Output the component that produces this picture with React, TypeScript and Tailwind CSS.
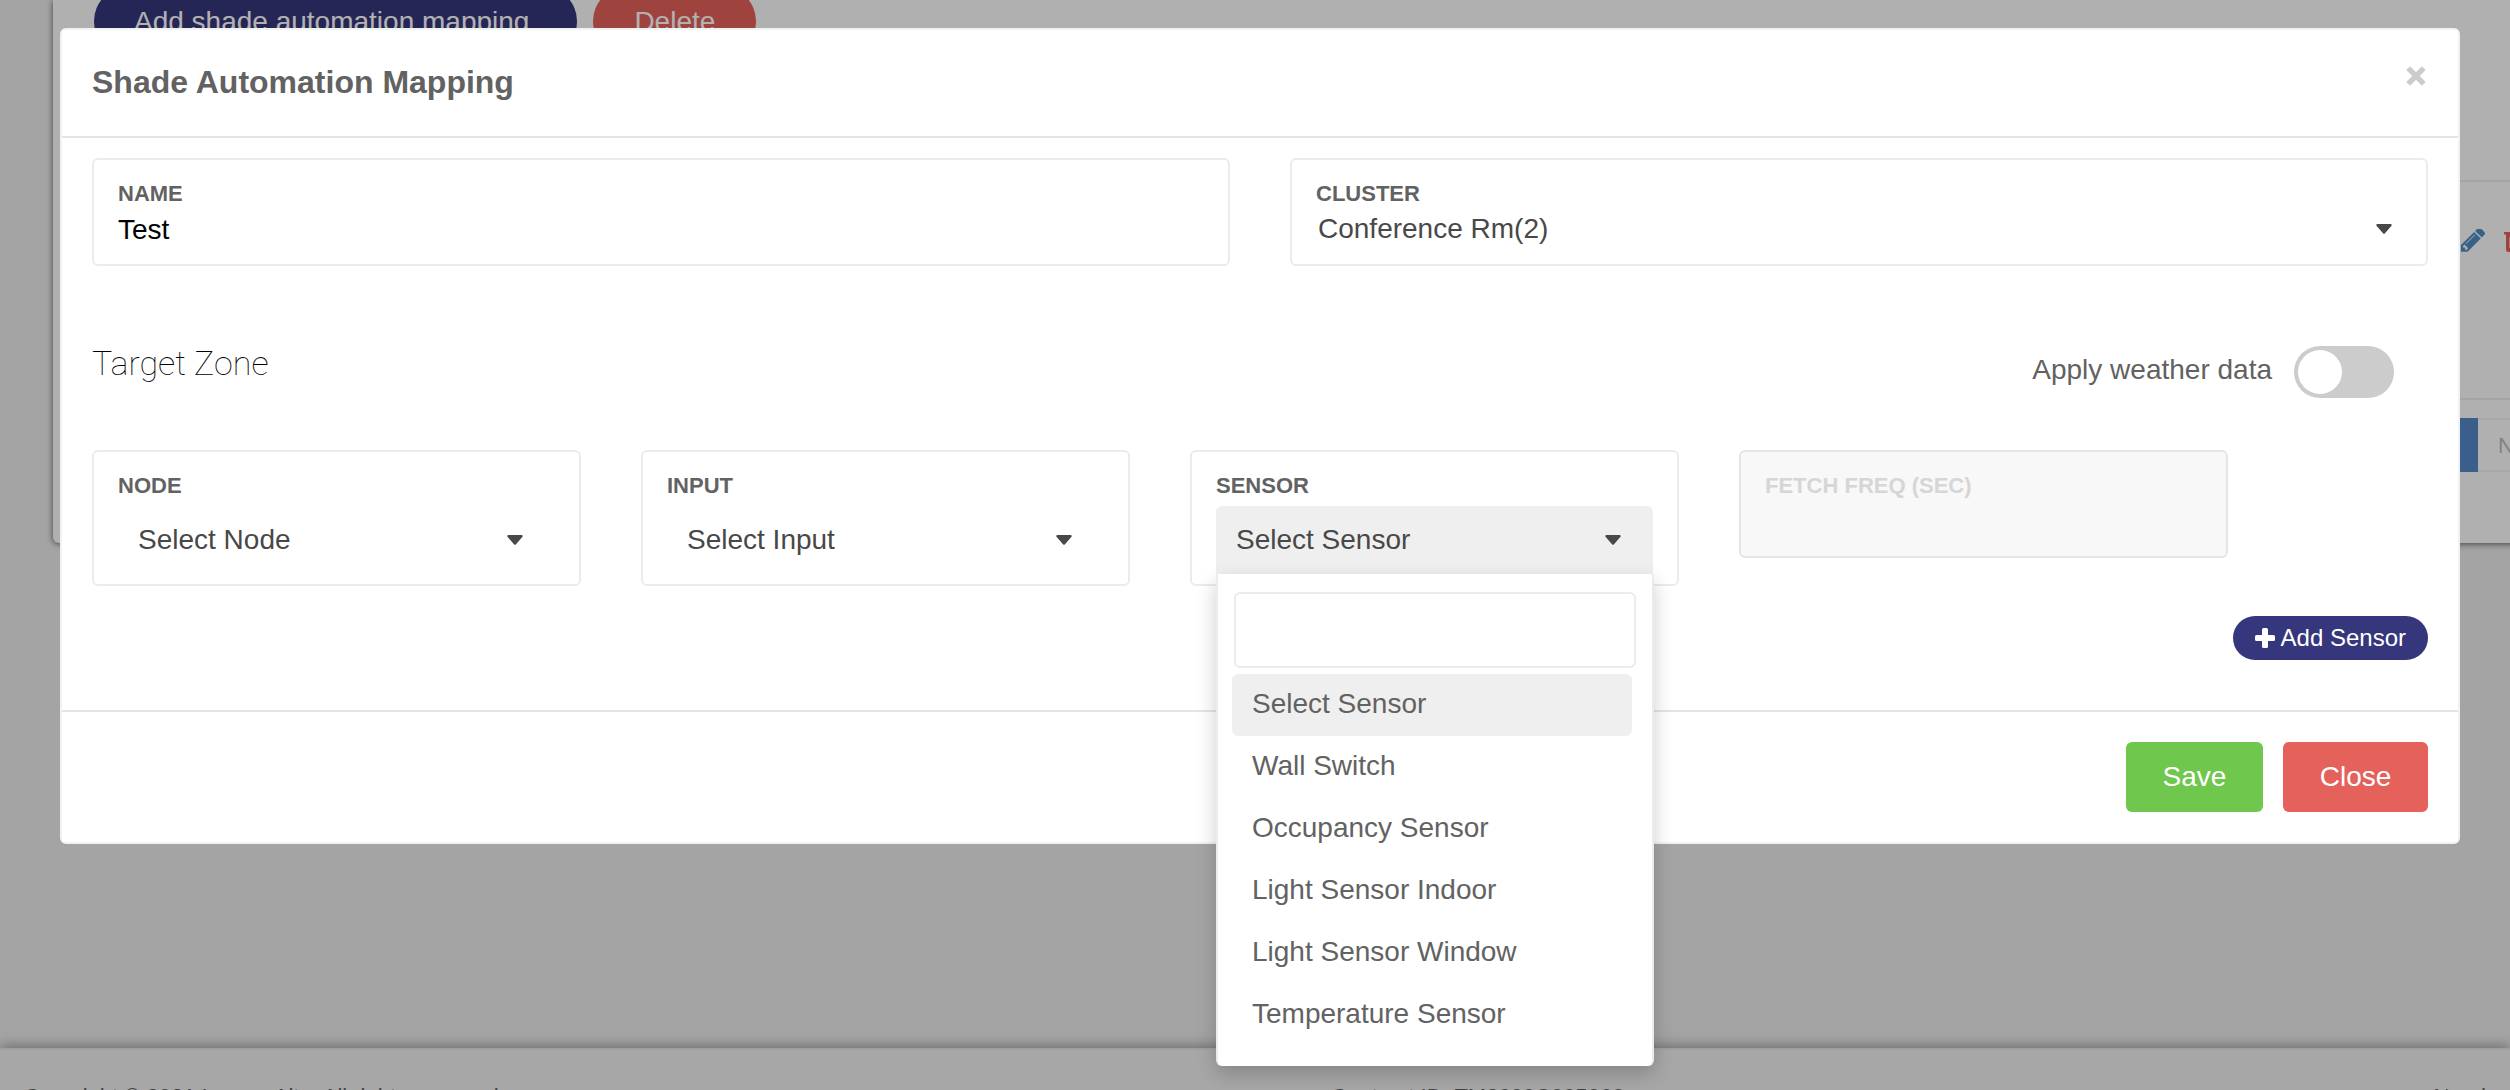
import React, { useState } from "react";

const label = "block text-[22px] leading-7 font-bold uppercase text-[#626262]";
const field = "rounded-md border-2 border-[#ebebeb] bg-white px-6 pt-5";
const options = [
  "Select Sensor",
  "Wall Switch",
  "Occupancy Sensor",
  "Light Sensor Indoor",
  "Light Sensor Window",
  "Temperature Sensor",
];

function Caret() {
  return (
    <svg viewBox="0 0 16 10" className="h-[10px] w-4 shrink-0" aria-hidden="true">
      <path d="M1.6 0h12.8c1.2 0 1.7 1.3.9 2.1L9 9.3a1.4 1.4 0 0 1-2 0L.7 2.1C-.1 1.3.4 0 1.6 0z" fill="#484848" />
    </svg>
  );
}

function CloseIcon() {
  return (
    <svg viewBox="0 0 20 20" className="size-5" aria-hidden="true">
      <path d="M2.2 2.2l15.600 15.600M17.800 2.200L2.200 17.800" stroke="#cccccc" strokeWidth="5.400" />
    </svg>
  );
}

function PlusIcon() {
  return (
    <svg viewBox="0 0 20 20" className="size-5" aria-hidden="true">
      <rect x="0" y="7" width="20" height="6" rx="1.500" fill="white" />
      <rect x="7" y="0" width="6" height="20" rx="1.500" fill="white" />
    </svg>
  );
}

function PencilIcon() {
  return (
    <svg viewBox="128 253 1515 1411" className="h-[23px] w-6" aria-hidden="true">
      <path
        fill="#508dc3"
        d="M491 1536l91-91-235-235-91 91v107h128v128h107zm523-928q0-22-22-22-10 0-17 7l-542 542q-7 7-7 17 0 22 22 22 10 0 17-7l542-542q7-7 7-17zm-54-192l416 416-832 832h-416v-416zm683 96q0 53-37 90l-166 166-416-416 166-165q36-38 90-38 53 0 91 38l235 234q37 39 37 91z"
      />
    </svg>
  );
}

function TrashIcon() {
  return (
    <svg viewBox="0 0 20 23" className="h-[23px] w-5" aria-hidden="true">
      <path
        fill="#e46059"
        fillRule="evenodd"
        d="M.5 3H6l1-2.200Q7.300 0 8.200 0h3.600q.9 0 1.200.8L14 3h5.500q.5 0 .5.500V5q0 .5-.5.500H18V20q0 3-2.500 3h-11Q2 23 2 20V5.500H.5Q0 5.500 0 5V3.500Q0 3 .5 3zM8 3h4l-.6-1.300H8.600zM5.500 8v11H7V8zm3.800 0v11h1.400V8zM13 8v11h1.500V8z"
      />
    </svg>
  );
}

function ZoneSelect({ id, title, value }: { id: string; title: string; value: string }) {
  return (
    <div className={`${field} h-[136px] pb-2`}>
      <label htmlFor={id} className={label}>{title}</label>
      <div className="mt-1.5 flex h-[68px] items-center pr-8 pl-5">
        <select id={id} className="min-w-0 flex-1 appearance-none bg-transparent text-[28px] leading-9 text-[#484848]">
          <option>{value}</option>
        </select>
        <Caret />
      </div>
    </div>
  );
}

function Backdrop() {
  return (
    <div className="flex h-screen flex-col bg-[#ebebeb]">
      <main className="-mr-6 ml-[53px] h-[543px] rounded-b-md bg-[#fcfcfc] pl-[41px] shadow-[0_1px_6px_rgba(0,0,0,0.6)]">
        <div className="flex gap-4">
          <button className="-mt-[13px] h-[69px] rounded-[34px] bg-[#36367c] pr-12 pl-10 text-[28px] whitespace-nowrap text-white">
            Add shade automation mapping
          </button>
          <button className="-mt-[13px] h-[69px] rounded-[34px] bg-[#e46059] px-[41px] text-[28px] text-white">Delete</button>
        </div>
        <div className="mt-[124px] flex h-[220px] items-start justify-end border-y-2 border-[#ebebeb] pt-[47px] pr-6">
          <button aria-label="Edit" className="w-[43px]"><PencilIcon /></button>
          <button aria-label="Remove" className="w-[6px]"><TrashIcon /></button>
        </div>
        <div className="mt-[18px] flex justify-end pr-6">
          <button className="h-[54px] w-12 bg-[#5589c7] text-2xl text-white">1</button>
          <button className="h-[54px] w-8 overflow-hidden border-y-2 border-[#f2f2f2] pl-5 text-left text-[22px] text-[#bbbbbb]">Next</button>
        </div>
      </main>
      <div className="flex-1" />
      <footer className="grid h-[42px] grid-cols-[531fr_400fr_69fr] overflow-hidden border-t-2 border-[#e5e5e5] bg-[#efefef] px-6 pt-[33px] text-[22px] leading-7 whitespace-nowrap text-[#626262] shadow-[0_-2px_12px_rgba(0,0,0,0.35)]">
        <span>Copyright © 2021 Lumen Alto. All rights reserved</span>
        <span>Contract ID: TM2000C005060</span>
        <span className="text-right">Need</span>
      </footer>
    </div>
  );
}

export default function App() {
  const [selected, setSelected] = useState("Select Sensor");
  return (
    <div className="relative h-screen overflow-hidden font-['Liberation_Sans',Arial,sans-serif]">
      <Backdrop />
      <div className="absolute inset-0 bg-black/30 pt-7 pr-[50px] pl-[60px]">
        <div role="dialog" aria-labelledby="dialog-title" className="rounded-md border-2 border-[#f0f3f2] bg-white">
          <header className="flex h-[108px] items-start justify-between border-b-2 border-[#e5e5e5] px-[30px] pt-8">
            <h1 id="dialog-title" className="text-[32px] leading-10 font-bold text-[#626262]">Shade Automation Mapping</h1>
            <button aria-label="Close dialog" className="flex h-7 items-center pr-0.5"><CloseIcon /></button>
          </header>

          <section className="px-[30px] pt-5">
            <div className="grid grid-cols-2 gap-[60px]">
              <div className={`${field} h-[108px]`}>
                <label htmlFor="name" className={label}>Name</label>
                <input id="name" defaultValue="Test" className="block h-11 w-full bg-transparent text-[28px] text-black outline-none" />
              </div>
              <div className={`${field} h-[108px]`}>
                <label htmlFor="cluster" className={label}>Cluster</label>
                <div className="flex h-[42px] items-center pr-[10px] pl-0.5">
                  <select id="cluster" className="min-w-0 flex-1 appearance-none bg-transparent text-[28px] leading-9 text-[#484848]">
                    <option>Conference Rm(2)</option>
                  </select>
                  <Caret />
                </div>
              </div>
            </div>

            <div className="mt-[70px] flex h-[72px] items-start justify-between pr-[34px]">
              <h2 className="font-[Roboto] text-[34px] leading-[54px] font-thin text-black">Target Zone</h2>
              <label className="mt-2.5 flex items-center gap-[22px] text-[28px] text-[#626262]">
                <span className="pb-1">Apply weather data</span>
                <span className="flex h-[52px] w-[100px] items-center rounded-full bg-[#cccccc] px-1 has-checked:justify-end has-checked:bg-[#6fc74d]">
                  <input type="checkbox" role="switch" className="size-11 appearance-none rounded-full bg-white" />
                </span>
              </label>
            </div>

            <div className="mt-[42px] grid grid-cols-[repeat(4,minmax(0,489fr))_140fr] gap-x-[60px]">
              <ZoneSelect id="node" title="Node" value="Select Node" />
              <ZoneSelect id="input" title="Input" value="Select Input" />
              <div className={`${field} relative h-[136px]`}>
                <span id="sensor-label" className={label}>Sensor</span>
                <button aria-labelledby="sensor-label" aria-expanded="true" className="mt-1.5 flex h-[68px] w-full items-center justify-between rounded-t-md bg-[#efefef] pr-8 pl-5 text-[28px] text-[#484848]">
                  {selected}
                  <Caret />
                </button>
                <div className="absolute top-[122px] right-[23px] left-6 z-10 rounded-b-md border-x-2 border-[#ebebeb] bg-white px-4 pt-[18px] pb-5 shadow-[0_8px_20px_rgba(0,0,0,0.2)]">
                  <input aria-label="Search sensors" className="mb-1.5 block h-[76px] w-full rounded-md border-2 border-[#ebebeb] px-4 text-[28px]" />
                  <ul role="listbox" aria-labelledby="sensor-label" className="mr-1 -ml-0.5">
                    {options.map((option) => (
                      <li
                        key={option}
                        role="option"
                        aria-selected={option === selected}
                        onClick={() => setSelected(option)}
                        className="h-[62px] rounded-md px-5 text-[28px] leading-[60px] text-[#626262] aria-selected:bg-[#efefef]"
                      >
                        {option}
                      </li>
                    ))}
                  </ul>
                </div>
              </div>
              <div className="h-[108px] rounded-md border-2 border-[#e5e5e5] bg-[#f8f8f8] px-6 pt-5">
                <label htmlFor="freq" className="block text-[22px] leading-7 font-bold text-[#d6d6d6] uppercase">Fetch Freq (sec)</label>
                <input id="freq" disabled className="block h-10 w-full bg-transparent text-[28px]" />
              </div>
            </div>

            <div className="flex justify-end pt-[30px] pb-[50px]">
              <button className="flex h-11 items-center gap-1.5 rounded-full bg-[#36367c] px-[22px] text-2xl text-white">
                <PlusIcon />
                Add Sensor
              </button>
            </div>
          </section>

          <footer className="flex justify-end gap-5 border-t-2 border-[#e5e5e5] p-[30px] text-[28px] text-white">
            <button className="h-[70px] w-[137px] rounded-md bg-[#6fc74d]">Save</button>
            <button className="h-[70px] w-[145px] rounded-md bg-[#e4625b]">Close</button>
          </footer>
        </div>
      </div>
    </div>
  );
}
